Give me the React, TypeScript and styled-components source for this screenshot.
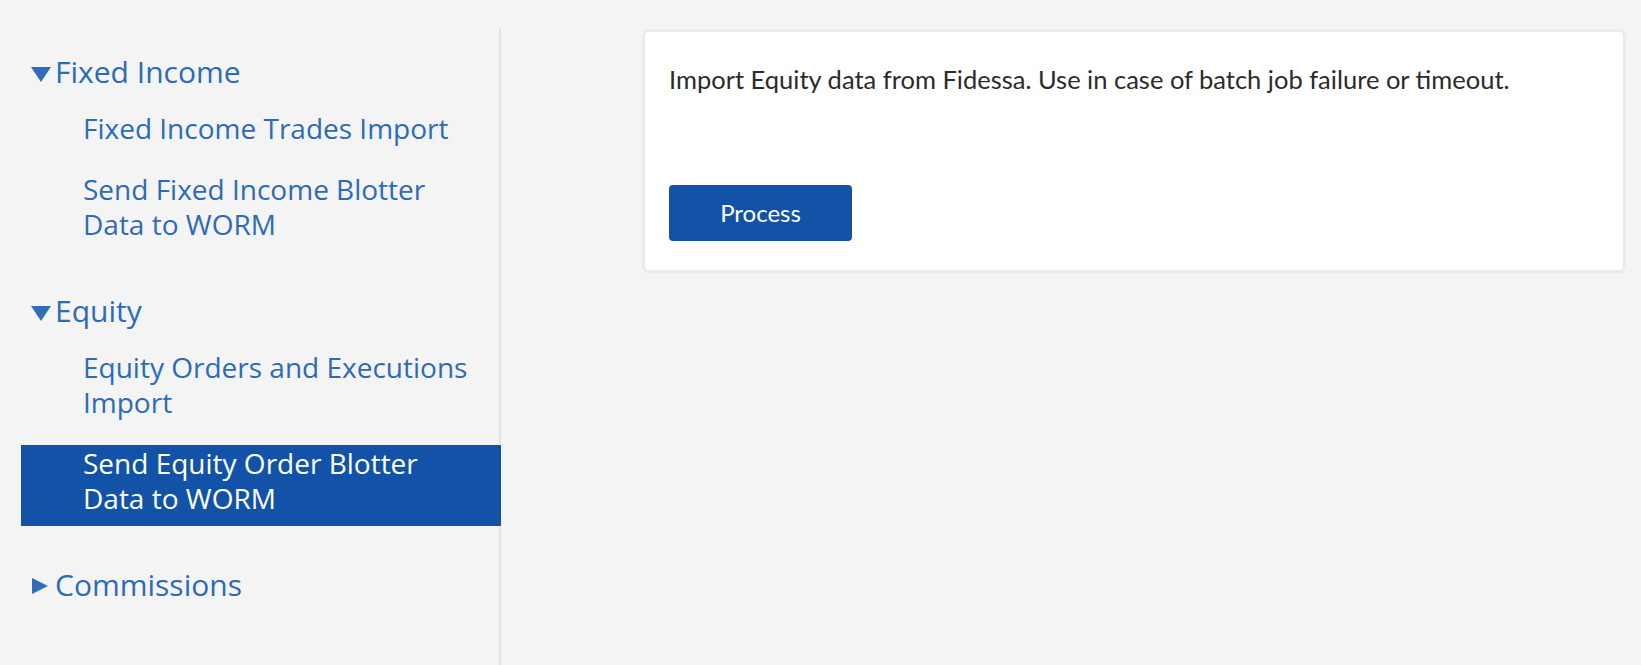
import React, { useState } from 'react';
import styled, { createGlobalStyle } from 'styled-components';

const GlobalStyle = createGlobalStyle`
  html, body {
    margin: 0;
    padding: 0;
    background: #f4f4f4;
  }
  * {
    box-sizing: border-box;
  }
`

const Page = styled.div`
  display: flex;
  align-items: stretch;
  min-height: 100vh;
  padding-top: 28px;
  font-family: "Open Sans", "Noto Sans", sans-serif;
`

const Sidebar = styled.nav`
  width: 480px;
  margin-left: 21px;
  padding-top: 24px;
  border-right: 2px solid #e3e3e3;
  flex-shrink: 0;
`

const Group = styled.div`
  margin-bottom: 39px;
`

const GroupTitle = styled.div`
  display: flex;
  align-items: center;
  gap: 4px;
  padding-left: 10px;
  font-size: 30px;
  line-height: 40px;
  color: #2c6bb6;
  cursor: pointer;
`

const Caret = styled.svg<{ $open: boolean }>`
  width: 20px;
  height: ${p => (p.$open ? '15px' : '16px')};
  margin-top: ${p => (p.$open ? '4px' : '1px')};
  flex-shrink: 0;
`

const Items = styled.ul`
  list-style: none;
  margin: 18px 0 0;
  padding: 0;
`

const Item = styled.li<{ $active?: boolean }>`
  margin-bottom: 15px;
  margin-right: ${p => (p.$active ? '-2px' : '0')};
  padding: 1px 16px 10px 62px;
  font-size: 28px;
  line-height: 35px;
  color: ${p => (p.$active ? '#ffffff' : '#2c6bb6')};
  background: ${p => (p.$active ? '#1253a8' : 'transparent')};
  cursor: pointer;

  &:last-child {
    margin-bottom: 0;
  }
`

const Main = styled.main`
  flex: 1;
  padding: 1px 15px 0 141px;
`

const Card = styled.section`
  background: #ffffff;
  border: 3px solid #ebebeb;
  border-radius: 7px;
  padding: 32px 24px 29px;
`

const Description = styled.p`
  margin: 0 0 90px;
  font-family: Lato, "Open Sans", sans-serif;
  font-size: 25.5px;
  line-height: 1.2;
  color: #2b2b2b;
`

const Button = styled.button`
  display: block;
  width: 183px;
  height: 56px;
  border: 0;
  border-radius: 4px;
  background: #1253a8;
  color: #ffffff;
  font-family: Lato, "Open Sans", sans-serif;
  font-size: 24px;
  cursor: pointer;
`

type Section = {
  title: string
  open: boolean
  items: string[]
}

const sections: Section[] = [
  {
    title: 'Fixed Income',
    open: true,
    items: ['Fixed Income Trades Import', 'Send Fixed Income Blotter Data to WORM'],
  },
  {
    title: 'Equity',
    open: true,
    items: ['Equity Orders and Executions Import', 'Send Equity Order Blotter Data to WORM'],
  },
  {
    title: 'Commissions',
    open: false,
    items: [],
  },
]

const CaretIcon = ({ open }: { open: boolean }) =>
  open ? (
    <Caret $open viewBox="0 0 20 15">
      <polygon points="0,0 20,0 10,15" fill="#2f6db8" />
    </Caret>
  ) : (
    <Caret $open={false} viewBox="0 0 20 16">
      <polygon points="1,0 17,8 1,16" fill="#2f6db8" />
    </Caret>
  )

const App = () => {
  const [active, setActive] = useState('Send Equity Order Blotter Data to WORM')

  return (
    <>
      <GlobalStyle />
      <Page>
        <Sidebar>
          {sections.map(section => (
            <Group key={section.title}>
              <GroupTitle>
                <CaretIcon open={section.open} />
                {section.title}
              </GroupTitle>
              {section.open && (
                <Items>
                  {section.items.map(item => (
                    <Item key={item} $active={item === active} onClick={() => setActive(item)}>
                      {item}
                    </Item>
                  ))}
                </Items>
              )}
            </Group>
          ))}
        </Sidebar>
        <Main>
          <Card>
            <Description>
              Import Equity data from Fidessa. Use in case of batch job failure or timeout.
            </Description>
            <Button>Process</Button>
          </Card>
        </Main>
      </Page>
    </>
  );
};

export default App;
